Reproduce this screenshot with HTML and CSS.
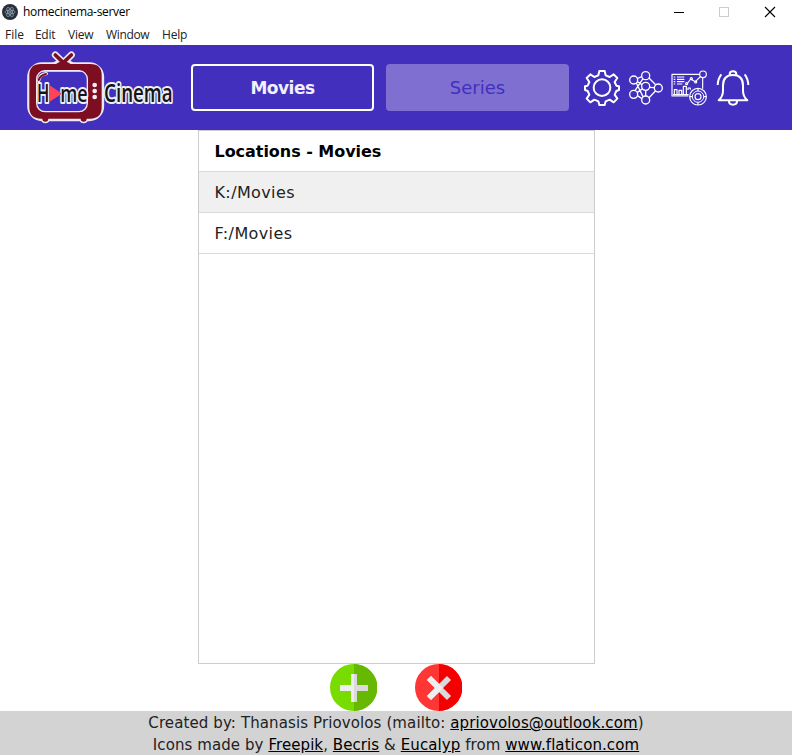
FILE: index.html
```
<!DOCTYPE html>
<html lang="en">
<head>
<meta charset="utf-8">
<title>homecinema-server</title>
<link rel="stylesheet" href="styles.css">
</head>
<body>
<div class="titlebar">
  <svg class="app-icon" viewBox="0 0 16 16"><circle cx="8" cy="8" r="8" fill="#2b2e3a"/><g fill="none" stroke="#8fa9b5" stroke-width=".7"><ellipse cx="8" cy="8" rx="5.2" ry="2"/><ellipse cx="8" cy="8" rx="5.2" ry="2" transform="rotate(60 8 8)"/><ellipse cx="8" cy="8" rx="5.2" ry="2" transform="rotate(120 8 8)"/></g><circle cx="8" cy="8" r=".8" fill="#9feaf9"/></svg>
  <span class="app-name">homecinema-server</span>
  <svg class="controls" viewBox="0 0 132 24" shape-rendering="crispEdges"><path d="M14 12.5h10" stroke="#000"/><path d="M59.500 7.500h9v9h-9z" fill="none" stroke="#ccc"/><path d="M105 7l10 10M115 7l-10 10" stroke="#000" stroke-width="1.1" shape-rendering="auto"/></svg>
</div>
<nav class="menubar"><span class="m-file">File</span><span class="m-edit">Edit</span><span class="m-view">View</span><span class="m-window">Window</span><span class="m-help">Help</span></nav>
<header class="header">
  <svg class="logo" viewBox="0 0 510 255">
    <g stroke-linecap="round" stroke-linejoin="round">
      <g fill="none" stroke="#eee9f0">
        <path d="M121 30l24 23 24-23" stroke-width="21"/>
        <path d="M116 61q29-22 58 0" stroke-width="16"/>
        <path d="M91 214v7M206 214v7" stroke-width="28"/>
        <rect x="51" y="66" width="202" height="148" rx="30" stroke-width="29"/>
      </g>
      <path d="M121 30l24 23 24-23" fill="none" stroke="#7d0d20" stroke-width="11"/>
      <path d="M116 63q29-28 58 0z" fill="#7d0d20"/>
      <path d="M91 214v7M206 214v7" stroke="#7d0d20" stroke-width="18"/>
      <path fill-rule="evenodd" fill="#7d0d20" d="M78 57H226Q260 57 260 91V187Q260 221 226 221H78Q43 221 43 187V91Q43 57 78 57ZM90 77Q65 77 65 104V174Q65 200 90 200H193Q217 200 217 174V104Q217 77 193 77Z"/>
      <rect x="65" y="77" width="152" height="123" rx="25" fill="none" stroke="#eee9f0" stroke-width="4"/>
      <path d="M71 107Q73 88 94 86" fill="none" stroke="#eee9f0" stroke-width="10"/><path d="M71 105Q75 91 93 87" fill="none" stroke="#7d0d20" stroke-width="6"/>
    </g>
    <g fill="#f4edf0"><circle cx="239" cy="120" r="7"/><circle cx="239" cy="138" r="7"/><circle cx="239" cy="156" r="7"/></g>
    <g class="wordmark"><text x="66" y="170" textLength="37" lengthAdjust="spacingAndGlyphs" font-size="73">H</text><text x="136" y="170" textLength="82" lengthAdjust="spacingAndGlyphs" font-size="70">me</text><text x="267" y="170" textLength="206" lengthAdjust="spacingAndGlyphs" font-size="74">Cinema</text></g>
    <path d="M104 123l33 23-33 22z" fill="#ff435b" stroke="#ff435b" stroke-width="4" stroke-linejoin="round"/>
  </svg>
  <div class="tabs"><button class="tab active">Movies</button><button class="tab">Series</button></div>
  <div class="tools">
    <svg viewBox="27 30 108 108" stroke-width="6"><path d="M73 33h16l3 13 12 5 12-8 11 11-8 12 5 11 8 2v11l-8 3-5 11 8 12-11 11-12-8-12 5-3 11h-16l-3-11-12-5-12 8-11-11 8-12-5-11-8-3v-11l8-2 5-11-8-12 11-11 12 8 12-5z"/><circle cx="81" cy="83" r="25"/></svg>
    <svg viewBox="159 30 108 108" stroke-width="4"><path d="M187 55l14-5M222 54l20 20M184 69l20 41M187 65l14 9M223 82l15 1M186 98l17-12M187 107l14 9M222 113l20-21M212 91v17M180 92l24-36"/><circle cx="176" cy="60" r="12"/><circle cx="212" cy="47" r="12"/><circle cx="212" cy="79" r="12"/><circle cx="250" cy="84" r="12"/><circle cx="176" cy="103" r="12"/><circle cx="212" cy="120" r="12"/></svg>
    <svg viewBox="27 30 108 108" stroke-width="3.500"><path d="M112 43H30v65h49M122 54v32M35 51h5M45 51h22M35 58h5M45 58h22M35 65h5M45 65h22M35 72h5M45 72h16M33 104h47M37 103V89h8v14M51 103V91h8v12M64 103V79h9v24M78 90v-6h7v5M77 69l9-12 14 8 16-16"/><circle cx="74" cy="71" r="3"/><circle cx="88" cy="56" r="3"/><circle cx="101" cy="66" r="3"/><circle cx="123" cy="43" r="10"/><circle cx="108" cy="110" r="25"/><circle cx="108" cy="110" r="17" stroke-width="3"/><circle cx="108" cy="110" r="9"/><path d="M108 85v8M108 127v8M83 110h8M125 110h8"/></svg>
    <svg viewBox="159 30 108 108" stroke-width="6"><path d="M203 46v-3q0-9 10-9t10 9v3M170 121q13-12 13-29V77q0-32 30-32t30 32v15q0 17 13 29zM201 124q0 10 12 10t12-10M178 43q-10 13-11 32M248 43q10 13 11 32"/></svg>
  </div>
</header>
<main class="content">
  <section class="locations"><div class="row heading">Locations - Movies</div><div class="row selected">K:/Movies</div><div class="row">F:/Movies</div></section>
  <div class="actions">
    <svg viewBox="0 0 47 47"><circle cx="23.500" cy="23.500" r="23.500" fill="#78dc00"/><path d="M24 0a23.500 23.500 0 0 1 0 47z" fill="#67b800"/><path d="M21 10h3v28h-3zM10 21h14v6H10z" fill="#eee"/><path d="M24 10h3v11h11v6H27v11h-3z" fill="#dadada"/></svg>
    <svg viewBox="0 0 47 47"><circle cx="23.500" cy="23.500" r="23.500" fill="#ff3636"/><path d="M24 0a23.500 23.500 0 0 1 0 47z" fill="#f50000"/><path d="M14 14l20 20M34 14L14 34" stroke="#dadada" stroke-width="5.800"/><path d="M14 14l10 10L14 34" fill="none" stroke="#eee" stroke-width="5.800"/></svg>
  </div>
</main>
<footer class="footer"><div class="credit creator">Created by: Thanasis Priovolos (mailto: <a>apriovolos@outlook.com</a>)</div><div class="credit">Icons made by <a>Freepik</a>, <a>Becris</a> &amp; <a>Eucalyp</a> from <a>www.flaticon.com</a></div></footer>
</body>
</html>
```
FILE: styles.css
```
* { box-sizing: border-box; }
body { margin: 0; height: 755px; overflow: hidden; display: flex; flex-direction: column; background: #fff; color: #000; font-family: Verdana, "DejaVu Sans", sans-serif; }
svg { display: block; }
.titlebar { height: 24px; flex: none; display: flex; align-items: center; padding-left: 2px; }
.app-icon { width: 16px; height: 16px; }
.app-name { margin-left: 5px; flex: 1; font: 12px/20px "Open Sans", sans-serif; letter-spacing: -.3px; }
.controls { width: 132px; height: 24px; }
.menubar { height: 21px; flex: none; display: flex; padding-left: 5px; gap: 12px; font: 12px/21px "Open Sans", sans-serif; color: #222; }
.m-file { width: 18px; }
.m-edit { width: 21px; letter-spacing: -.3px; }
.m-view { width: 26px; letter-spacing: -.2px; }
.m-window { width: 44px; letter-spacing: -.35px; }
.m-help { letter-spacing: -.2px; }
.header { height: 85px; flex: none; display: flex; background: #422fbe; padding-left: 15px; }
.logo { width: 170px; height: 85px; flex: none; overflow: visible; }
.wordmark { font-family: "Open Sans", sans-serif; font-weight: 600; fill: #151515; stroke: #f1eef5; stroke-width: 12px; stroke-linejoin: round; paint-order: stroke; }
.tabs { display: flex; gap: 12px; margin: 19px 0 0 6px; }
.tab { width: 183px; height: 47px; padding: 0; border: 0; border-radius: 4px; background: #7f6fd1; color: #422fbe; font: 18px "DejaVu Sans", sans-serif; }
.tab.active { border: 2px solid #fff; background: transparent; color: #f2f0fc; font-size: 17px; font-weight: bold; letter-spacing: -.5px; }
.tools { display: flex; gap: 7.7px; margin: 25px 0 0 15px; }
.tools svg { width: 36px; height: 36px; fill: none; stroke: #fff; stroke-linejoin: round; }
.content { height: 581px; flex: none; display: flex; flex-direction: column; align-items: center; }
.locations { width: 397px; height: 534px; margin-left: 1px; border: 1px solid #ccc; }
.row { height: 41px; padding-left: 15.500px; border-bottom: 1px solid #d9d9d9; font-size: 16px; line-height: 41px; letter-spacing: .38px; color: #222; }
.row.heading { color: #000; font-weight: bold; letter-spacing: -.04px; }
.row.selected { background: #f0f0f0; }
.actions { display: flex; gap: 38px; }
.actions svg { width: 47px; height: 47px; }
.footer { height: 44px; flex: none; padding-top: 1px; background: #d3d3d3; text-align: center; font-size: 15px; line-height: 22px; color: #222; }
.credit { height: 22px; white-space: nowrap; letter-spacing: .08px; }
.creator { letter-spacing: .11px; }
.footer a { color: #000; text-decoration: underline; }
```
